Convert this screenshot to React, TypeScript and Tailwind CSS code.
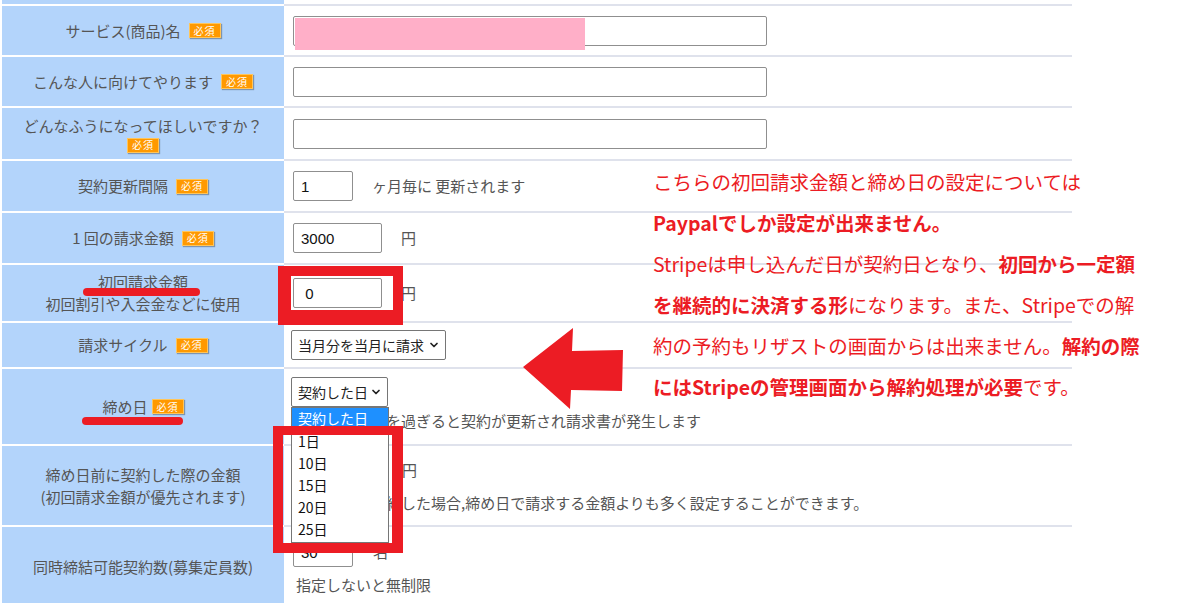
import { ChevronDown } from "lucide-react";
import type { ReactNode } from "react";

// 必須バッジ
const Badge = () => (
  <span className="inline-flex items-center justify-center w-[32px] h-[15px] bg-[#ff9900] border border-[#ffc55a] text-white text-[10px] leading-none shadow-[1px_1px_1px_rgba(0,0,0,0.3)] tracking-[1px]">
    必須
  </span>
);

type RowProps = {
  h: string;
  label?: ReactNode;
  children?: ReactNode;
  cell?: string;
};

const Row = ({ h, label, children, cell }: RowProps) => (
  <div className={`flex ${h}`}>
    <div className="w-[282px] shrink-0 bg-[#b3d4fb] border-b-2 border-white flex flex-col items-center justify-center text-center text-[15px] leading-[22px] text-[#555]">
      {label}
    </div>
    <div className={`flex-1 border-b-2 border-[#dfe2ec] pl-[9px] ${cell ?? "flex items-center"}`}>
      {children}
    </div>
  </div>
);

const TextInput = ({ w, value = "" }: { w: string; value?: string }) => (
  <input
    readOnly
    value={value}
    className={`${w} h-[30px] border border-[#8f8f8f] rounded-[2px] bg-white px-[7px] text-[15px] text-[#111] font-['Liberation_Sans',sans-serif] outline-none`}
  />
);

export default function App() {
  return (
    <div className="relative w-[1200px] h-[603px] overflow-hidden bg-white font-['Noto_Sans_CJK_JP',sans-serif]">
      {/* テーブル */}
      <div className="w-[1072px] pl-[2px]">
        <Row h="h-[6px]" />
        <Row
          h="h-[51px]"
          label={
            <span className="flex items-center gap-[8px]">
              サービス(商品)名 <Badge />
            </span>
          }
        >
          <TextInput w="w-[474px]" />
        </Row>
        <Row
          h="h-[51px]"
          label={
            <span className="flex items-center gap-[8px]">
              こんな人に向けてやります <Badge />
            </span>
          }
        >
          <TextInput w="w-[474px]" />
        </Row>
        <Row
          h="h-[53px]"
          label={
            <>
              <span>どんなふうになってほしいですか？</span>
              <span className="mt-[1px] flex">
                <Badge />
              </span>
            </>
          }
        >
          <TextInput w="w-[474px]" />
        </Row>
        <Row
          h="h-[52px]"
          label={
            <span className="flex items-center gap-[8px]">
              契約更新間隔 <Badge />
            </span>
          }
        >
          <TextInput w="w-[60px]" value="1" />
          <span className="ml-[19px] text-[15px] text-[#555]">ヶ月毎に 更新されます</span>
        </Row>
        <Row
          h="h-[52px]"
          label={
            <span className="flex items-center gap-[8px]">
              1 回の請求金額 <Badge />
            </span>
          }
        >
          <TextInput w="w-[89px]" value="3000" />
          <span className="ml-[19px] text-[15px] text-[#555]">円</span>
        </Row>
        <Row
          h="h-[58px]"
          label={
            <>
              <span>初回請求金額</span>
              <span>初回割引や入会金などに使用</span>
            </>
          }
        >
          <TextInput w="w-[89px]" value=" 0" />
          <span className="ml-[19px] text-[15px] text-[#555]">円</span>
        </Row>
        <Row
          h="h-[46px]"
          label={
            <span className="flex items-center gap-[8px]">
              請求サイクル <Badge />
            </span>
          }
        >
          <div className="-ml-[2px] w-[155px] h-[30px] border border-[#767676] rounded-[2px] bg-white flex items-center justify-between pl-[6px] pr-[5px] text-[14px] text-[#222]">
            当月分を当月に請求
            <ChevronDown size={12} strokeWidth={3.5} />
          </div>
        </Row>
        <Row
          h="h-[77px]"
          cell="flex flex-col pt-[8px] gap-[4px]"
          label={
            <span className="flex items-center gap-[4px]">
              締め日 <Badge />
            </span>
          }
        >
          <div className="relative -ml-[2px] w-[97px] h-[30px]">
            <div className="w-full h-full border border-[#767676] rounded-[2px] bg-white flex items-center justify-between pl-[6px] pr-[5px] text-[14px] text-[#222]">
              契約した日
              <ChevronDown size={12} strokeWidth={3.5} />
            </div>
            {/* 開いたドロップダウン */}
            <div className="absolute left-0 top-[30px] z-10 w-[98px] border border-[#767676] bg-white pb-[2px] text-[14px] text-[#111]">
              <div className="h-[22px] pl-[6px] leading-[20px] bg-[#1e90ff] text-white">契約した日</div>
              <div className="h-[22px] pl-[6px] leading-[22px]">1日</div>
              <div className="h-[22px] pl-[6px] leading-[22px]">10日</div>
              <div className="h-[22px] pl-[6px] leading-[22px]">15日</div>
              <div className="h-[22px] pl-[6px] leading-[22px]">20日</div>
              <div className="h-[22px] pl-[6px] leading-[22px]">25日</div>
            </div>
          </div>
          <span className="pl-[3px] text-[15px] leading-[20px] text-[#555]">
            毎月の締め日を過ぎると契約が更新され請求書が発生します
          </span>
        </Row>
        <Row
          h="h-[81px]"
          cell="flex flex-col pt-[9px] gap-[8px]"
          label={
            <>
              <span>締め日前に契約した際の金額</span>
              <span>(初回請求金額が優先されます)</span>
            </>
          }
        >
          <div className="flex items-center">
            <TextInput w="w-[89px]" value="0" />
            <span className="ml-[20px] text-[15px] text-[#555]">円</span>
          </div>
          <span className="pl-[3px] text-[15px] leading-[20px] text-[#555]">
            締め日前に契約した場合,締め日で請求する金額よりも多く設定することができます。
          </span>
        </Row>
        <Row
          h="h-[82px]"
          cell="flex flex-col pt-[10px] gap-[8px]"
          label={<span>同時締結可能契約数(募集定員数)</span>}
        >
          <div className="flex items-center">
            <TextInput w="w-[60px]" value="30" />
            <span className="ml-[20px] text-[15px] text-[#555]">名</span>
          </div>
          <span className="pl-[3px] text-[15px] leading-[20px] text-[#555]">指定しないと無制限</span>
        </Row>
      </div>

      {/* 塗りつぶし */}
      <div className="absolute left-[295px] top-[18px] w-[290px] h-[32px] bg-[#ffafc8]" />

      {/* 赤枠 */}
      <div className="absolute left-[278px] top-[266px] w-[125px] h-[59px] border-[#ec1c24] border-t-[10px] border-l-[13px] border-r-[10px] border-b-[15px]" />
      <div className="absolute left-[273px] top-[426px] w-[130px] h-[127px] border-[#ec1c24] border-t-[9px] border-l-[10px] border-r-[11px] border-b-[10px] z-20" />

      {/* 赤の下線 */}
      <div className="absolute left-[83px] top-[288px] w-[117px] h-[8px] rounded-full bg-[#ec1c24]" />
      <div className="absolute left-[82px] top-[417px] w-[101px] h-[8px] rounded-full bg-[#ec1c24]" />

      {/* 矢印 */}
      <svg className="absolute left-0 top-0 pointer-events-none" width="1200" height="603">
        <polygon
          points="523,367 573,328 572,351 623,350 622,391 571,390 570,409"
          fill="#ec1c24"
        />
      </svg>

      {/* 注釈 */}
      <div className="absolute left-[653px] top-[161px] whitespace-nowrap text-[19.5px] leading-[41px] text-[#ec1c24]">
        <div>こちらの初回請求金額と締め日の設定については</div>
        <div className="font-bold">Paypalでしか設定が出来ません。</div>
        <div>
          Stripeは申し込んだ日が契約日となり、<span className="font-bold">初回から一定額</span>
        </div>
        <div>
          <span className="font-bold">を継続的に決済する形</span>になります。また、Stripeでの解
        </div>
        <div>
          約の予約もリザストの画面からは出来ません。<span className="font-bold">解約の際</span>
        </div>
        <div>
          <span className="font-bold">にはStripeの管理画面から解約処理が必要</span>です。
        </div>
      </div>
    </div>
  );
}
